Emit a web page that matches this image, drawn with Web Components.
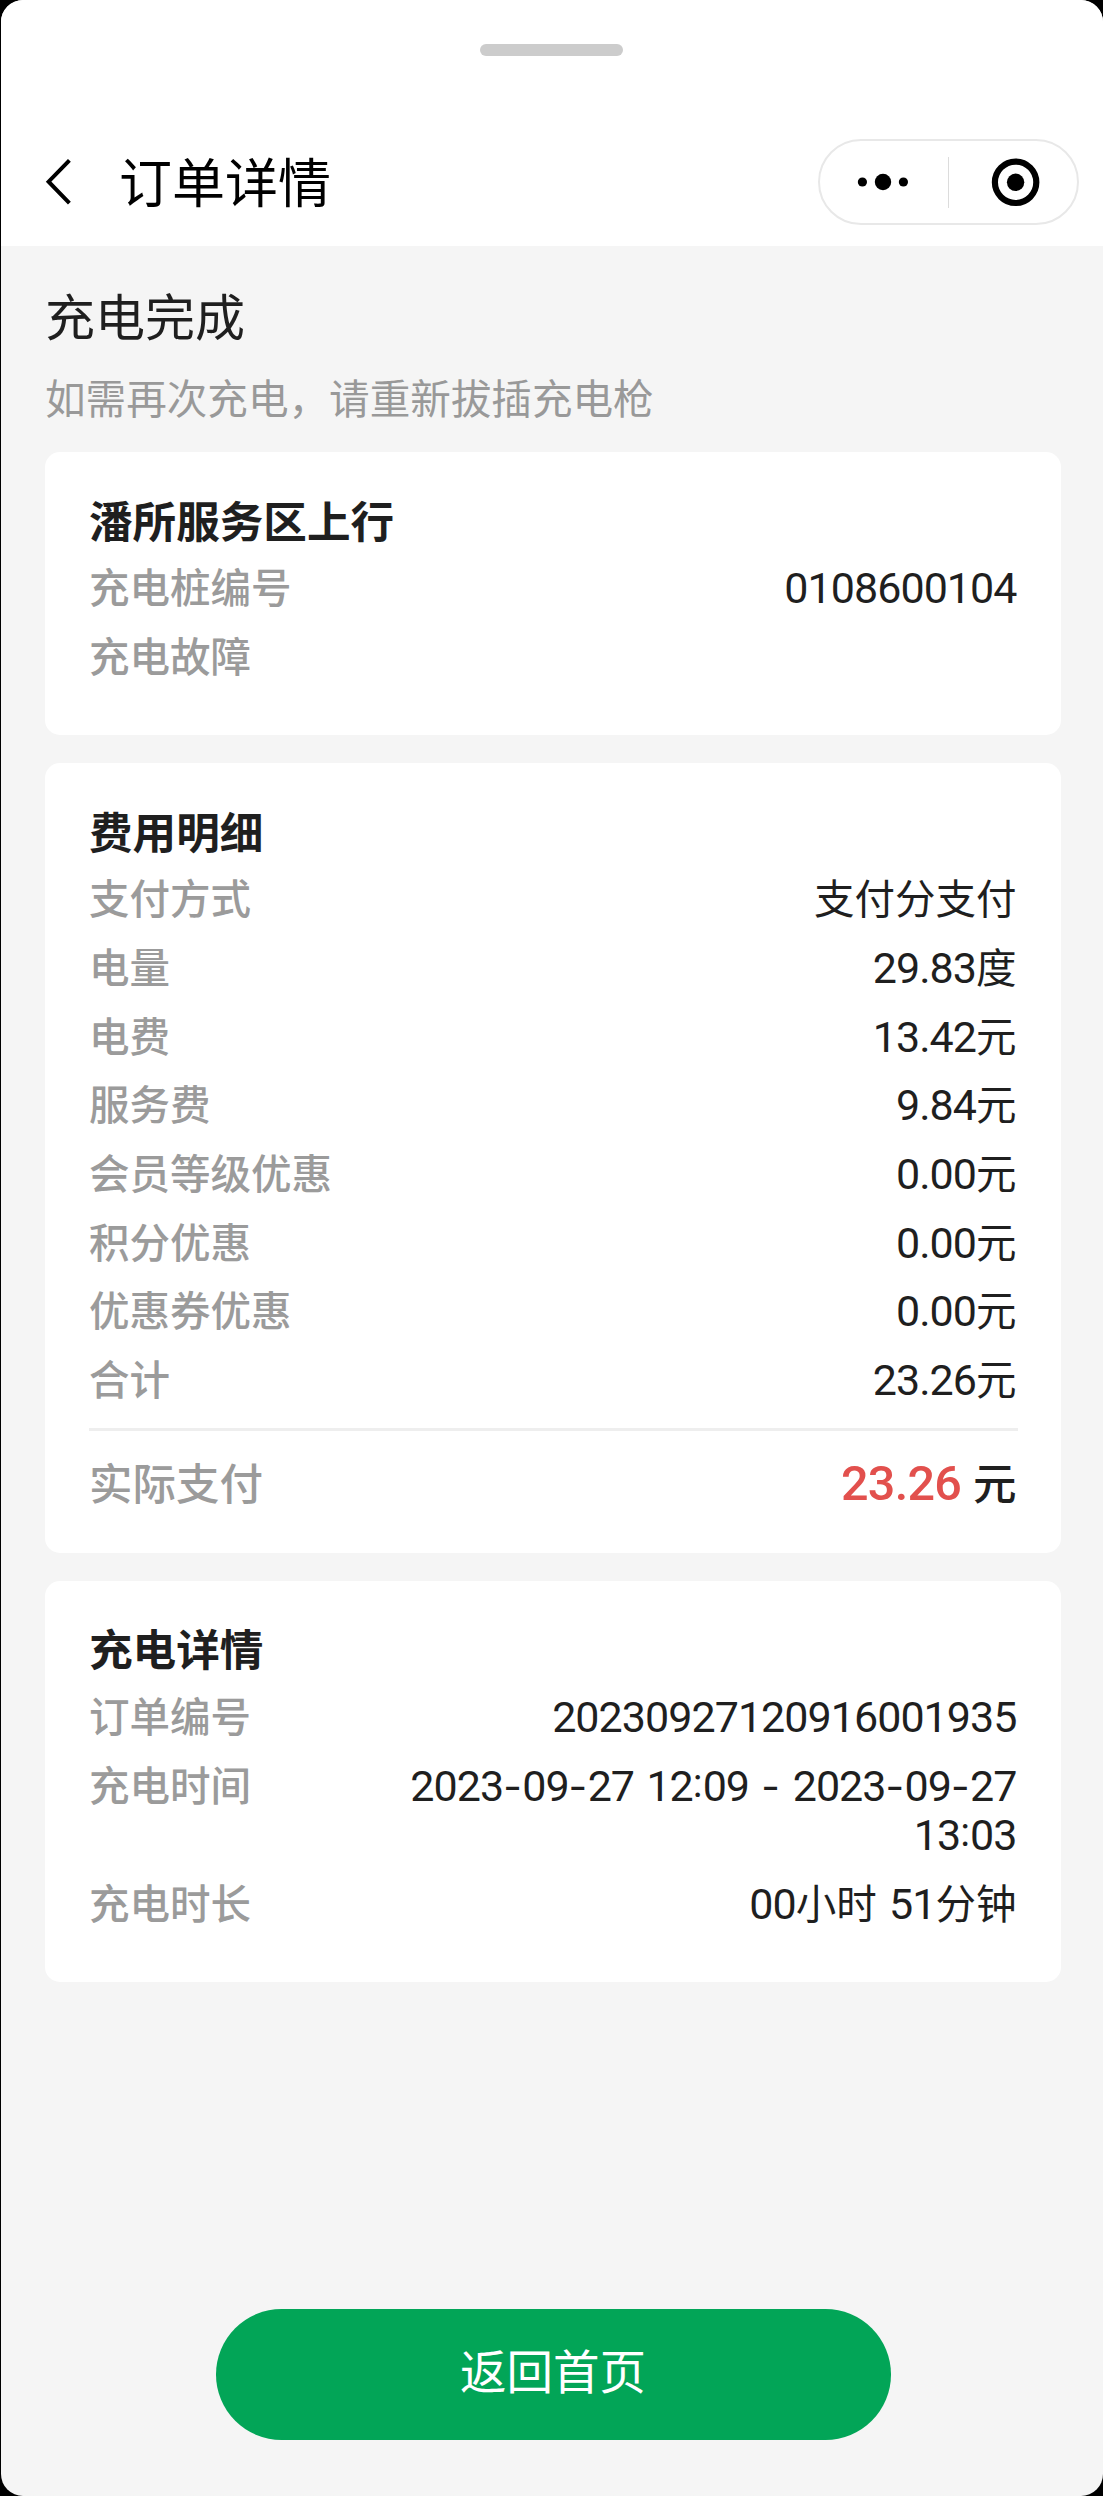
<!DOCTYPE html>
<html lang="zh-CN">
<head>
<meta charset="utf-8">
<title>订单详情</title>
<style>
html, body {
  margin: 0;
  background: #000;
}

body {
  font-family: "Noto Sans CJK SC", "Noto Sans", sans-serif;
  color: #1f1f1f;
}
</style>
</head>
<body>

<order-page>
  <nav-bar slot="header">订单详情</nav-bar>
  <order-status heading="充电完成">如需再次充电，请重新拔插充电枪</order-status>

  <info-card heading="潘所服务区上行">
    <info-row label="充电桩编号" value="0108600104"></info-row>
    <info-row label="充电故障"></info-row>
  </info-card>

  <info-card heading="费用明细">
    <info-row label="支付方式" value="支付分支付"></info-row>
    <info-row label="电量" value="29.83度"></info-row>
    <info-row label="电费" value="13.42元"></info-row>
    <info-row label="服务费" value="9.84元"></info-row>
    <info-row label="会员等级优惠" value="0.00元"></info-row>
    <info-row label="积分优惠" value="0.00元"></info-row>
    <info-row label="优惠券优惠" value="0.00元"></info-row>
    <info-row label="合计" value="23.26元"></info-row>
    <total-row label="实际支付" amount="23.26">元</total-row>
  </info-card>

  <info-card heading="充电详情">
    <info-row label="订单编号" value="20230927120916001935"></info-row>
    <info-row label="充电时间" value="2023-09-27 12:09 - 2023-09-27 13:03"></info-row>
    <info-row label="充电时长" value="00小时 51分钟"></info-row>
  </info-card>

  <home-button slot="footer">返回首页</home-button>
</order-page>

<script>
function makeTemplate(html) {
  const template = document.createElement('template');
  template.innerHTML = html;
  return template;
}

class BaseElement extends HTMLElement {
  constructor() {
    super();
    this.attachShadow({mode: 'open'});
    this.shadowRoot.appendChild(document.importNode(this.constructor.template.content, true));
  }

  fill(selector, name) {
    this.shadowRoot.querySelector(selector).textContent = this.getAttribute(name) || '';
  }
}

class OrderPage extends BaseElement {
  static template = makeTemplate(`
<style>
:host {
  display: flex;
  flex-direction: column;
  box-sizing: border-box;
  height: 2496px;
  margin-left: 1px;
  border-radius: 22px;
  overflow: hidden;
  background: #f5f5f5;
}

main {
  flex: 1;
  display: flex;
  flex-direction: column;
  gap: 28px;
  padding: 0 42px 0 44px;
}

footer {
  display: flex;
  justify-content: center;
  padding: 0 0 56px 2px;
}
</style>
<slot name="header"></slot>
<main><slot></slot></main>
<footer><slot name="footer"></slot></footer>
`);
}

class NavBar extends BaseElement {
  static template = makeTemplate(`
<style>
:host {
  display: flex;
  flex-direction: column;
  height: 246px;
  background: #fff;
  color: #000;
}

.handle {
  align-self: center;
  width: 143px;
  height: 12px;
  margin: 44px 1px 0 0;
  border-radius: 6px;
  background: #ccc;
}

.bar {
  display: flex;
  align-items: center;
  height: 86px;
  margin-top: 83px;
  padding: 0 24px 0 43px;
}

.back {
  width: 28px;
  height: 48px;
}

h1 {
  flex: 1;
  margin: 0 0 4px 47px;
  font-size: 53px;
  font-weight: 400;
  line-height: 60px;
}

.capsule {
  display: flex;
  align-items: center;
  box-sizing: border-box;
  width: 261px;
  height: 86px;
  border: 2px solid #e8e8e8;
  border-radius: 43px;
}

.capsule svg {
  flex: 1;
  height: 52px;
}

.capsule i {
  width: 1px;
  height: 51px;
  background: #dcdcdc;
}
</style>
<div class="handle"></div>
<div class="bar">
  <svg class="back" viewBox="0 0 28 48" fill="none" stroke="#000" stroke-width="4">
    <path d="M25.4 2.3 L4.6 23.7 L25.4 45.1"/>
  </svg>
  <h1><slot></slot></h1>
  <div class="capsule">
    <svg viewBox="0 0 128 52">
      <circle cx="42.4" cy="26" r="4.6"/>
      <circle cx="63" cy="26" r="8.2"/>
      <circle cx="83.4" cy="26" r="4.6"/>
    </svg>
    <i></i>
    <svg viewBox="0 0 128 52">
      <circle cx="66.6" cy="26.3" r="20.7" fill="none" stroke="#000" stroke-width="6.2"/>
      <circle cx="66.6" cy="26.3" r="8.7"/>
    </svg>
  </div>
</div>
`);
}

class OrderStatus extends BaseElement {
  static template = makeTemplate(`
<style>
:host {
  display: block;
  height: 178px;
}

h2 {
  margin: 0;
  padding-top: 38px;
  font-size: 50px;
  font-weight: 400;
  line-height: 60px;
}

p {
  margin: 23px 0 0;
  font-size: 40.6px;
  line-height: 60px;
  color: #999;
}
</style>
<h2></h2>
<p><slot></slot></p>
`);

  connectedCallback() {
    this.fill('h2', 'heading');
  }
}

class InfoCard extends BaseElement {
  static template = makeTemplate(`
<style>
:host {
  display: block;
  padding: 42.5px 43px 46px 44px;
  border-radius: 15px;
  background: #fff;
}

h3 {
  margin: 0 0 8.2px;
  font-size: 43.6px;
  font-weight: 700;
  line-height: 49px;
}
</style>
<h3></h3>
<slot></slot>
`);

  connectedCallback() {
    this.fill('h3', 'heading');
  }
}

class InfoRow extends BaseElement {
  static template = makeTemplate(`
<style>
:host {
  display: flex;
  justify-content: space-between;
  padding: 9.4px 0;
  font-size: 40.5px;
  line-height: 49.9px;
}

.label {
  font-weight: 500;
  color: #9b9b9b;
}

.value {
  max-width: 650px;
  min-height: 49.9px;
  padding-right: 1.5px;
  text-align: right;
}

.num {
  font-family: Roboto, sans-serif;
  font-size: 43px;
  letter-spacing: -0.95px;
  line-height: 0;
}

.dash {
  font-family: Inter, sans-serif;
  line-height: 0;
  letter-spacing: 0.4px;
  word-spacing: 0.5px;
}

.colon {
  font-family: Roboto, sans-serif;
  line-height: 0;
  vertical-align: 4px;
}
</style>
<span class="label"></span>
<span class="value"></span>
`);

  connectedCallback() {
    this.fill('.label', 'label');
    const value = this.shadowRoot.querySelector('.value');
    value.textContent = '';
    // digits and punctuation use their own faces, the rest stays in the CJK one
    for (const part of (this.getAttribute('value') || '').match(/[\d.]+|-|:|\s+|[^\d\s.:-]+/g) || []) {
      const span = document.createElement('span');
      span.textContent = part;
      if (/\d/.test(part)) {
        span.className = 'num';
      } else if (part === ':') {
        span.className = 'colon';
      } else if (part === '-' || part.trim() === '') {
        span.className = 'dash';
      }
      value.appendChild(span);
    }
  }
}

class TotalRow extends BaseElement {
  static template = makeTemplate(`
<style>
:host {
  display: flex;
  justify-content: space-between;
  margin-top: 16px;
  padding-top: 24.5px;
  border-top: 3px solid #eee;
  font-size: 43.5px;
  line-height: 51px;
}

.label {
  font-weight: 500;
  color: #9b9b9b;
}

.value {
  padding-right: 1.5px;
  font-weight: 500;
}

.amount {
  margin-right: 2px;
  font-family: Roboto, sans-serif;
  font-size: 48.5px;
  line-height: 0;
  letter-spacing: -0.7px;
  color: #e2504d;
}
</style>
<span class="label"></span>
<span class="value"><span class="amount"></span> <slot></slot></span>
`);

  connectedCallback() {
    this.fill('.label', 'label');
    this.fill('.amount', 'amount');
  }
}

class HomeButton extends BaseElement {
  static template = makeTemplate(`
<style>
:host {
  display: block;
}

button {
  display: block;
  width: 675px;
  height: 131px;
  padding: 0 0 12px;
  border: 0;
  border-radius: 66px;
  background: #02a557;
  color: #fff;
  font: inherit;
  font-size: 46.5px;
}
</style>
<button type="button"><slot></slot></button>
`);
}

customElements.define('order-page', OrderPage);
customElements.define('nav-bar', NavBar);
customElements.define('order-status', OrderStatus);
customElements.define('info-card', InfoCard);
customElements.define('info-row', InfoRow);
customElements.define('total-row', TotalRow);
customElements.define('home-button', HomeButton);
</script>
</body>
</html>
